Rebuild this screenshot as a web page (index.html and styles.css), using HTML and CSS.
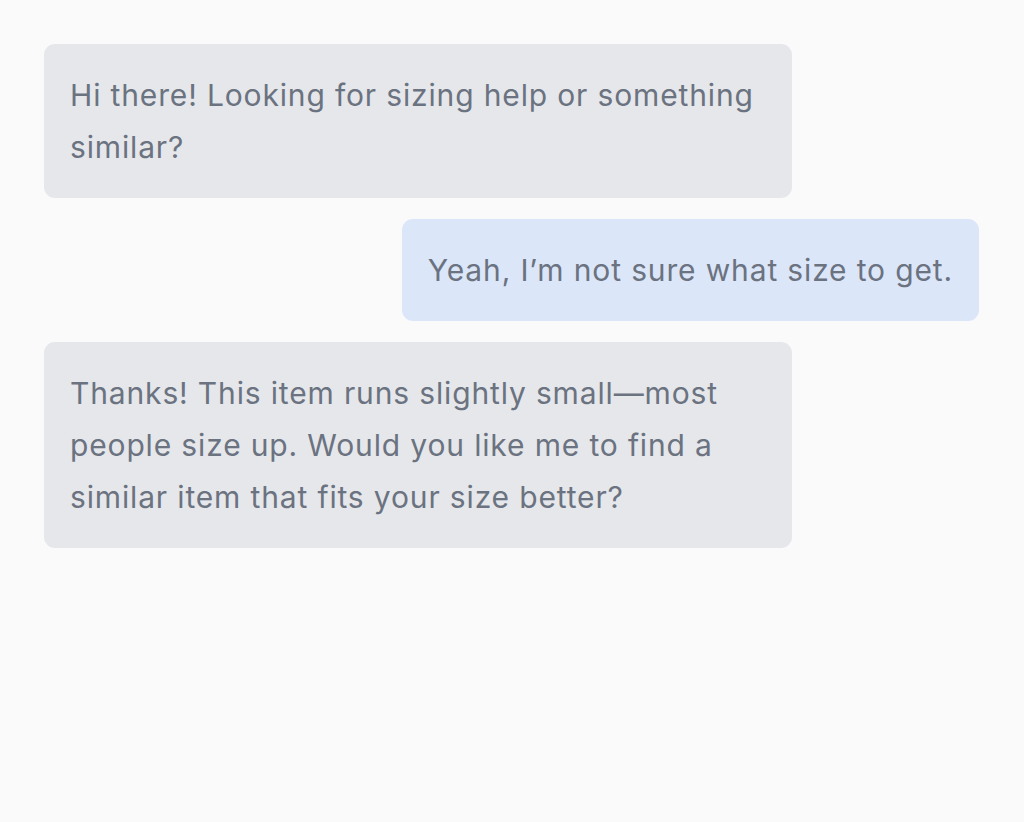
FILE: index.html
```html
<!DOCTYPE html>
<html lang="en">
<head>
<meta charset="utf-8">
<title>Chat</title>
<link rel="stylesheet" href="styles.css">
</head>
<body>
<main class="chat">
  <div class="msg msg-bot">Hi there! Looking for sizing help or something similar?</div>
  <div class="msg msg-user">Yeah, I’m not sure what size to get.</div>
  <div class="msg msg-bot">Thanks! This item runs slightly small—most people size up. Would you like me to find a similar item that fits your size better?</div>
</main>
</body>
</html>
```
FILE: styles.css
```css
html, body {
  margin: 0;
  padding: 0;
  background: #fafafa;
}
body {
  font-family: Inter, "Liberation Sans", sans-serif;
  color: #6b7280;
}
.chat {
  display: flex;
  flex-direction: column;
  gap: 21px;
  padding: 44px 45px 44px 44px;
}
.msg {
  max-width: 80%;
  box-sizing: border-box;
  padding: 25px 26px;
  border-radius: 11px;
  font-size: 30px;
  line-height: 52px;
  letter-spacing: 0.85px;
}
.msg-bot {
  align-self: flex-start;
  width: 80%;
  background: #e5e7eb;
}
.msg-user {
  align-self: flex-end;
  background: #dce6f9;
}
```
